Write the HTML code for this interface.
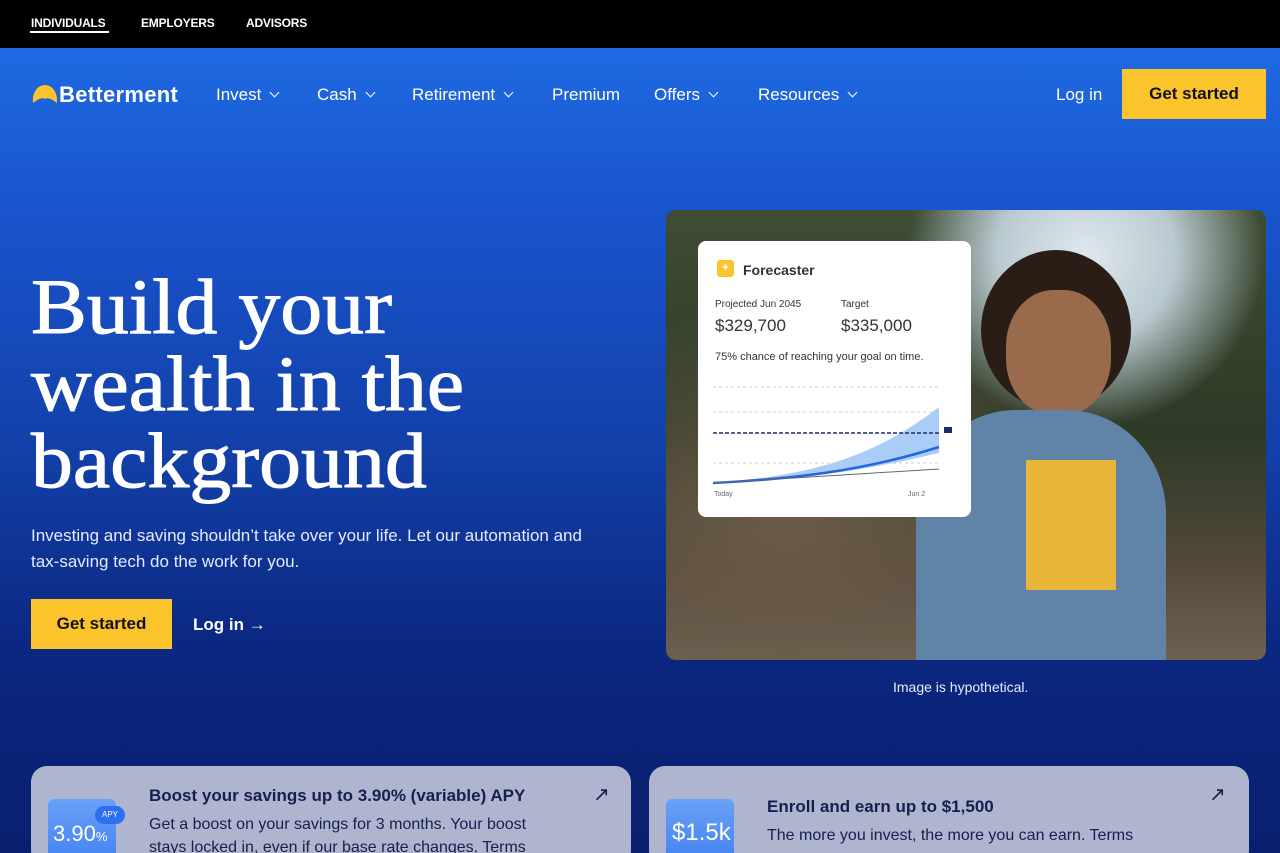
<!DOCTYPE html>
<html style="width:1280px;height:853px;overflow:hidden;background:#0a1f6e"><head><style>
*{margin:0;padding:0;box-sizing:border-box}
body{width:1280px;height:853px;overflow:hidden;font-family:"Liberation Sans",sans-serif;background:linear-gradient(180deg,#1e6ae2 48px,#1a55cf 200px,#1240a8 450px,#0b2780 650px,#0a1f6e 853px);color:#fff;position:relative}
.top{height:48px;background:#000;position:relative}
.top span{position:absolute;top:16px;font-size:12px;font-weight:bold;letter-spacing:-.2px}
.chev{display:inline-block;width:7px;height:7px;border-right:1.5px solid #fff;border-bottom:1.5px solid #fff;transform:rotate(45deg);margin-left:10px;position:relative;top:-4px}
.btn{position:absolute;background:#fcc42c;color:#111;font-weight:bold;font-size:17px;display:flex;align-items:center;justify-content:center}
h1{position:absolute;left:31px;top:268px;font-family:"Liberation Serif",serif;font-weight:normal;font-size:78px;line-height:77px;transform:scaleX(1.075);transform-origin:0 0;-webkit-text-stroke:1px #fff}
.sub{position:absolute;left:31px;top:523px;font-size:17px;line-height:26px;color:#e6ecff}
.photo{position:absolute;left:666px;top:210px;width:600px;height:450px;border-radius:10px;overflow:hidden;background:radial-gradient(ellipse at 70% 10%,#dfe8ee 0,#b9c9d0 15%,transparent 30%),radial-gradient(ellipse at 20% 70%,#6b5a48,transparent 50%),linear-gradient(180deg,#3e4d33,#2d3a26 50%,#54493b 80%,#6d6252)}
.card{position:absolute;left:698px;top:241px;width:273px;height:276px;background:#fff;border-radius:8px;color:#333}
.promo{position:absolute;top:766px;height:100px;background:#b0b5cf;border-radius:16px;color:#14204e;overflow:hidden}
</style></head><body>
<div class="top">
<span style="left:31px">INDIVIDUALS</span><div style="position:absolute;left:30px;top:31px;width:79px;height:2px;background:#fff"></div>
<span style="left:141px">EMPLOYERS</span><span style="left:246px">ADVISORS</span>
</div>
<svg style="position:absolute;left:32px;top:84px" width="26" height="20"><path d="M1 19 C0 8 6 1 13 1 C20 1 26 8 25 19 C20 15 16 13 13 15 C10 13 6 15 1 19Z" fill="#fcc42c"/></svg>
<div style="position:absolute;left:59px;top:82px;font-size:22px;font-weight:bold;letter-spacing:.3px">Betterment</div>
<div style="position:absolute;left:216px;top:85px;font-size:17px">Invest<i class="chev"></i></div>
<div style="position:absolute;left:317px;top:85px;font-size:17px">Cash<i class="chev"></i></div>
<div style="position:absolute;left:412px;top:85px;font-size:17px">Retirement<i class="chev"></i></div>
<div style="position:absolute;left:552px;top:85px;font-size:17px">Premium</div>
<div style="position:absolute;left:654px;top:85px;font-size:17px">Offers<i class="chev"></i></div>
<div style="position:absolute;left:758px;top:85px;font-size:17px">Resources<i class="chev"></i></div>
<div style="position:absolute;left:1056px;top:85px;font-size:17px">Log in</div>
<div class="btn" style="left:1122px;top:69px;width:144px;height:50px">Get started</div>
<h1>Build your<br>wealth in the<br>background</h1>
<div class="sub">Investing and saving shouldn’t take over your life. Let our automation and<br>tax-saving tech do the work for you.</div>
<div class="btn" style="left:31px;top:599px;width:141px;height:50px">Get started</div>
<div style="position:absolute;left:193px;top:615px;font-size:17px;font-weight:bold">Log in →</div>
<div class="photo">
<div style="position:absolute;left:315px;top:40px;width:150px;height:160px;border-radius:50%;background:#2a1d15"></div>
<div style="position:absolute;left:340px;top:80px;width:105px;height:125px;border-radius:45%;background:#9a6a4c"></div>
<div style="position:absolute;left:250px;top:200px;width:250px;height:260px;border-radius:40% 40% 0 0;background:#5f84a8"></div>
<div style="position:absolute;left:360px;top:250px;width:90px;height:130px;background:#e8b43a"></div>
</div>
<div class="card">
<div style="position:absolute;left:19px;top:19px;width:17px;height:17px;background:#fcc42c;border-radius:3px;color:#fff;font-size:11px;text-align:center;line-height:17px">✦</div>
<div style="position:absolute;left:45px;top:21px;font-size:14px;font-weight:bold">Forecaster</div>
<div style="position:absolute;left:17px;top:58px;font-size:10px">Projected Jun 2045</div>
<div style="position:absolute;left:143px;top:58px;font-size:10px">Target</div>
<div style="position:absolute;left:17px;top:75px;font-size:17px">$329,700</div>
<div style="position:absolute;left:143px;top:75px;font-size:17px">$335,000</div>
<div style="position:absolute;left:17px;top:110px;font-size:11px">75% chance of reaching your goal on time.</div>
<svg style="position:absolute;left:15px;top:140px" width="250" height="120">
<g stroke="#ccc" stroke-dasharray="3 3"><line x1="0" y1="6" x2="226" y2="6"/><line x1="0" y1="31" x2="226" y2="31"/><line x1="0" y1="82" x2="226" y2="82"/></g>
<path d="M0 102 C80 95 150 85 226 26 L226 72 C150 90 80 100 0 102Z" fill="#a9cdf6"/>
<line x1="0" y1="52" x2="226" y2="52" stroke="#1c2a6e" stroke-dasharray="4 2" stroke-width="1.5"/>
<path d="M0 102 C80 98 150 90 226 66" stroke="#2464e0" stroke-width="2.5" fill="none"/>
<path d="M0 102 L226 88" stroke="#666" stroke-width="1" fill="none"/>
<rect x="231" y="46" width="8" height="6" fill="#1c2a6e"/>
<text x="1" y="115" font-size="7" fill="#666">Today</text><text x="195" y="115" font-size="7" fill="#666">Jun 2</text>
</svg>
</div>
<div style="position:absolute;left:893px;top:679px;font-size:14px;color:#e6ecff">Image is hypothetical.</div>
<div class="promo" style="left:31px;width:600px">
<div style="position:absolute;left:17px;top:33px;width:68px;height:70px;border-radius:6px;background:linear-gradient(#6aa0f6,#3f7ff0);color:#fff;font-size:22px;padding:22px 0 0 5px">3.90<small style="font-size:13px">%</small></div>
<div style="position:absolute;left:64px;top:40px;width:30px;height:18px;border-radius:9px;background:#2e6ff0;color:#fff;font-size:8px;text-align:center;line-height:18px">APY</div>
<div style="position:absolute;left:118px;top:20px;font-size:17px;font-weight:bold">Boost your savings up to 3.90% (variable) APY</div>
<div style="position:absolute;left:118px;top:47px;font-size:16px;line-height:23px">Get a boost on your savings for 3 months. Your boost<br>stays locked in, even if our base rate changes. Terms</div>
<div style="position:absolute;left:562px;top:16px;font-size:20px">↗</div>
</div>
<div class="promo" style="left:649px;width:600px">
<div style="position:absolute;left:17px;top:33px;width:68px;height:70px;border-radius:6px;background:linear-gradient(#6aa0f6,#3f7ff0);color:#fff;font-size:24px;padding:20px 0 0 6px">$1.5k</div>
<div style="position:absolute;left:118px;top:31px;font-size:17px;font-weight:bold">Enroll and earn up to $1,500</div>
<div style="position:absolute;left:118px;top:58px;font-size:16px;line-height:23px">The more you invest, the more you can earn. Terms</div>
<div style="position:absolute;left:560px;top:16px;font-size:20px">↗</div>
</div>
</body></html>
